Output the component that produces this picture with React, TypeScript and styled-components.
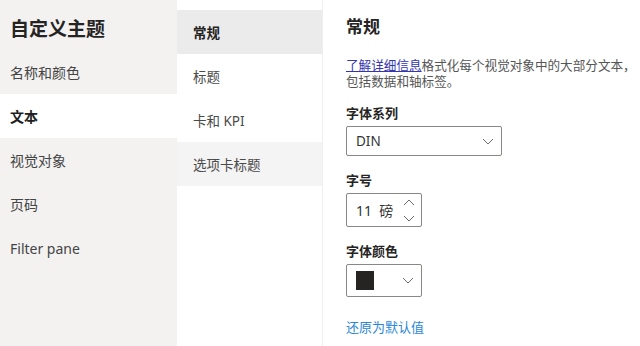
import React from "react";
import styled, { createGlobalStyle } from "styled-components";

const GlobalStyle = createGlobalStyle`
  html, body {
    margin: 0;
    padding: 0;
    background: #ffffff;
  }
  body {
    font-family: "Noto Sans", "Noto Sans CJK SC", sans-serif;
    color: #252423;
  }
`;

const sideItems = ["名称和颜色", "文本", "视觉对象", "页码", "Filter pane"];
const subItems = ["常规", "标题", "卡和 KPI", "选项卡标题"];

const Chevron: React.FC<{ up?: boolean }> = ({ up }) => (
  <svg width="12" height="7" viewBox="0 0 12 7">
    <polyline
      points={up ? "1,6 6,1 11,6" : "1,1 6,6 11,1"}
      fill="none"
      stroke="#6b6b6b"
      strokeWidth="1"
    />
  </svg>
);

const App: React.FC = () => {
  return (
    <>
      <GlobalStyle />
      <Page>
        <Sidebar>
          <SideTitle>自定义主题</SideTitle>
          {sideItems.map((item, index) => (
            <SideItem key={index} active={index === 1}>
              {item}
            </SideItem>
          ))}
        </Sidebar>
        <SubNav>
          {subItems.map((item, index) => (
            <SubItem key={index} active={index === 0} hover={index === 3}>
              {item}
            </SubItem>
          ))}
        </SubNav>
        <Panel>
          <PanelTitle>常规</PanelTitle>
          <Description>
            <a href="#">了解详细信息</a>格式化每个视觉对象中的大部分文本，包括数据和轴标签。
          </Description>
          <Field>
            <Label>字体系列</Label>
            <Select>
              <span>DIN</span>
              <Chevron />
            </Select>
          </Field>
          <Field>
            <Label>字号</Label>
            <Spin>
              <span>11&nbsp;&nbsp;磅</span>
              <Arrows>
                <Chevron up />
                <Chevron />
              </Arrows>
            </Spin>
          </Field>
          <Field>
            <Label>字体颜色</Label>
            <ColorPicker>
              <Swatch color="#252423" />
              <Chevron />
            </ColorPicker>
          </Field>
          <Reset href="#">还原为默认值</Reset>
        </Panel>
      </Page>
    </>
  );
};

const Page = styled.div`
  display: flex;
  width: 640px;
  height: 346px;
  overflow: hidden;
`;

const Sidebar = styled.div`
  width: 177px;
  flex-shrink: 0;
  background: #f3f2f1;
  display: flex;
  flex-direction: column;
`;

const SideTitle = styled.div`
  height: 50px;
  padding: 6px 10px 0;
  display: flex;
  align-items: center;
  box-sizing: border-box;
  font-size: 19px;
  font-weight: 700;
  color: #252423;
`;

const SideItem = styled.div<{ active?: boolean }>`
  height: 44px;
  padding: 0 10px;
  display: flex;
  align-items: center;
  font-size: 14px;
  color: ${(p) => (p.active ? "#201f1e" : "#444444")};
  font-weight: ${(p) => (p.active ? 700 : 400)};
  background: ${(p) => (p.active ? "#ffffff" : "transparent")};
`;

const SubNav = styled.div`
  width: 145px;
  flex-shrink: 0;
  padding-top: 10px;
  border-right: 1px solid #efefef;
  background: #ffffff;
`;

const SubItem = styled.div<{ active?: boolean; hover?: boolean }>`
  height: 44px;
  padding: 0 16px;
  display: flex;
  align-items: center;
  font-size: 13.5px;
  color: ${(p) => (p.active ? "#252423" : "#4a4a4a")};
  font-weight: ${(p) => (p.active ? 700 : 400)};
  background: ${(p) =>
    p.active ? "#ebebeb" : p.hover ? "#f4f4f4" : "transparent"};
`;

const Panel = styled.div`
  flex: 1;
  padding: 16px 4px 0 23px;
  display: flex;
  flex-direction: column;
  align-items: flex-start;
`;

const PanelTitle = styled.div`
  font-size: 17px;
  line-height: 22px;
  font-weight: 700;
  color: #252423;
`;

const Description = styled.div`
  margin-top: 20px;
  font-size: 12.6px;
  line-height: 16px;
  color: #555555;
  width: 290px;
  a {
    color: #3535b0;
    text-decoration: underline;
  }
`;

const Field = styled.div`
  margin-top: 14px;
  display: flex;
  flex-direction: column;
  align-items: flex-start;
  & + & {
    margin-top: 15px;
  }
`;

const Label = styled.div`
  font-size: 13px;
  line-height: 18px;
  font-weight: 700;
  color: #252423;
  margin-bottom: 4px;
`;

const Box = styled.div`
  box-sizing: border-box;
  border: 1px solid #8a8886;
  border-radius: 2px;
  background: #ffffff;
  display: flex;
  align-items: center;
  justify-content: space-between;
  font-size: 13.5px;
  color: #333333;
`;

const Select = styled(Box)`
  width: 156px;
  height: 30px;
  padding: 0 7px 0 9px;
`;

const Spin = styled(Box)`
  width: 76px;
  height: 34px;
  padding: 0 6px 0 9px;
  font-size: 14px;
`;

const Arrows = styled.div`
  display: flex;
  flex-direction: column;
  gap: 9px;
`;

const ColorPicker = styled(Box)`
  width: 76px;
  height: 33px;
  padding: 0 7px 0 9px;
`;

const Swatch = styled.div<{ color: string }>`
  width: 18px;
  height: 19px;
  background: ${(p) => p.color};
`;

const Reset = styled.a`
  margin-top: 22px;
  font-size: 13px;
  line-height: 16px;
  color: #2b88d8;
  text-decoration: none;
`;

export default App;
